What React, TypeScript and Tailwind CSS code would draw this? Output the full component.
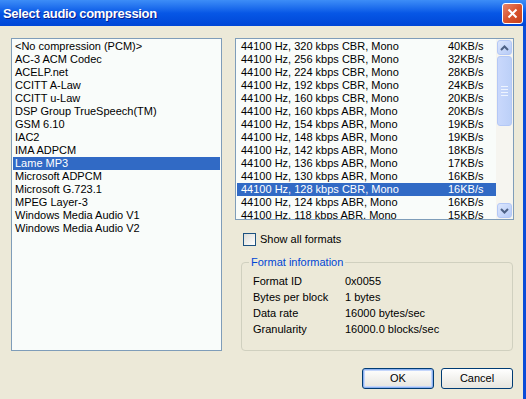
import React from "react";

const codecs = [
  "<No compression (PCM)>",
  "AC-3 ACM Codec",
  "ACELP.net",
  "CCITT A-Law",
  "CCITT u-Law",
  "DSP Group TrueSpeech(TM)",
  "GSM 6.10",
  "IAC2",
  "IMA ADPCM",
  "Lame MP3",
  "Microsoft ADPCM",
  "Microsoft G.723.1",
  "MPEG Layer-3",
  "Windows Media Audio V1",
  "Windows Media Audio V2",
];

const formats: [string, string][] = [
  ["44100 Hz, 320 kbps CBR, Mono", "40KB/s"],
  ["44100 Hz, 256 kbps CBR, Mono", "32KB/s"],
  ["44100 Hz, 224 kbps CBR, Mono", "28KB/s"],
  ["44100 Hz, 192 kbps CBR, Mono", "24KB/s"],
  ["44100 Hz, 160 kbps CBR, Mono", "20KB/s"],
  ["44100 Hz, 160 kbps ABR, Mono", "20KB/s"],
  ["44100 Hz, 154 kbps ABR, Mono", "19KB/s"],
  ["44100 Hz, 148 kbps ABR, Mono", "19KB/s"],
  ["44100 Hz, 142 kbps ABR, Mono", "18KB/s"],
  ["44100 Hz, 136 kbps ABR, Mono", "17KB/s"],
  ["44100 Hz, 130 kbps ABR, Mono", "16KB/s"],
  ["44100 Hz, 128 kbps CBR, Mono", "16KB/s"],
  ["44100 Hz, 124 kbps ABR, Mono", "16KB/s"],
  ["44100 Hz, 118 kbps ABR, Mono", "15KB/s"],
];

const info: [string, string][] = [
  ["Format ID", "0x0055"],
  ["Bytes per block", "1 bytes"],
  ["Data rate", "16000 bytes/sec"],
  ["Granularity", "16000.0 blocks/sec"],
];

function Arrow({ up }: { up: boolean }) {
  return (
    <svg width="9" height="6" viewBox="0 0 9 6">
      <path
        d={up ? "M1 5 L4.5 1.5 L8 5" : "M1 1 L4.5 4.5 L8 1"}
        fill="none"
        stroke="#4D6185"
        strokeWidth="2"
      />
    </svg>
  );
}

function ScrollBtn({ up }: { up: boolean }) {
  return (
    <div className="h-[17px] w-[17px] p-[1px]">
      <div className="flex h-full w-full items-center justify-center rounded-[3px] border border-[#B4C8F6] bg-gradient-to-br from-[#DCE6FD] to-[#B6CBF7]">
        <Arrow up={up} />
      </div>
    </div>
  );
}

export default function App() {
  return (
    <div
      className="flex h-[399px] w-[526px] flex-col overflow-hidden bg-[#ECE9D8] text-[11px] leading-[13px] text-black"
      style={{ fontFamily: '"Liberation Sans", Arial, sans-serif' }}
    >
      {/* Title bar */}
      <div className="flex h-[26px] shrink-0 items-center justify-between bg-gradient-to-b from-[#3D8DF7] via-[#0757E6] to-[#0046D6] pl-[3px] pr-[3px]">
        <span
          className="text-[13px] font-bold tracking-[-0.3px] text-white"
          style={{ textShadow: "1px 1px 0 #0A1E8C" }}
        >
          Select audio compression
        </span>
        <div className="flex h-[21px] w-[21px] items-center justify-center rounded-[3px] border border-white bg-gradient-to-br from-[#E8846A] via-[#D9542E] to-[#C6411B]">
          <svg width="11" height="11" viewBox="0 0 11 11">
            <path d="M1.5 1.5 L9.5 9.5 M9.5 1.5 L1.5 9.5" stroke="white" strokeWidth="2" />
          </svg>
        </div>
      </div>

      {/* Body */}
      <div className="flex flex-1 border-r-[3px] border-r-[#0A4CD8]">
        <div className="flex pl-[11px] pt-[12px]">
          {/* Codec list */}
          <div className="h-[313px] w-[211px] border border-[#7F9DB9] bg-[#F9FCFA] p-[1px]">
            {codecs.map((c) => {
              const sel = c === "Lame MP3";
              return (
                <div
                  key={c}
                  className={
                    "h-[13px] whitespace-nowrap pl-[2px] " +
                    (sel ? "bg-[#316AC5] text-white" : "")
                  }
                >
                  {c}
                </div>
              );
            })}
          </div>

          {/* Right column */}
          <div className="ml-[13px] flex w-[279px] flex-col">
            <div className="flex h-[182px] border border-[#7F9DB9] bg-[#F9FCFA]">
              <div className="flex-1 overflow-hidden pl-[1px] pt-[1px]">
                {formats.map(([f, r], i) => {
                  const sel = i === 11;
                  return (
                    <div
                      key={i}
                      className={
                        "flex h-[13px] whitespace-nowrap pl-[4px] " +
                        (sel ? "bg-[#316AC5] text-white" : "")
                      }
                    >
                      <span className="w-[207px]">{f}</span>
                      <span>{r}</span>
                    </div>
                  );
                })}
              </div>
              {/* Scrollbar */}
              <div className="flex w-[17px] flex-col bg-[#F6F5F0]">
                <ScrollBtn up />
                <div className="h-[71px] w-[17px] p-[1px] pt-0">
                  <div className="flex h-full w-full flex-col items-center justify-center gap-[2px] rounded-[3px] border border-[#B4C8F6] bg-gradient-to-r from-[#C9D8FC] to-[#BCD0F8]">
                    <div className="h-[1px] w-[7px] bg-[#EEF4FE]" />
                    <div className="h-[1px] w-[7px] bg-[#EEF4FE]" />
                    <div className="h-[1px] w-[7px] bg-[#EEF4FE]" />
                    <div className="h-[1px] w-[7px] bg-[#EEF4FE]" />
                  </div>
                </div>
                <div className="flex-1" />
                <ScrollBtn up={false} />
              </div>
            </div>

            {/* Checkbox */}
            <div className="mt-[12px] flex items-center pl-[8px]">
              <div className="h-[13px] w-[13px] border border-[#1C5180] bg-gradient-to-br from-[#DCDCD7] to-[#FFFFFF]" />
              <span className="ml-[4px] pt-[1px]">Show all formats</span>
            </div>

            {/* Group box */}
            <fieldset className="ml-[6px] mt-[10px] h-[95px] w-[272px] rounded-[4px] border border-[#D0D0BF] pl-[11px] pt-[6px]">
              <legend className="-ml-[4px] px-[2px] text-[#0046D5]">Format information</legend>
              <div className="flex flex-col gap-[3px]">
                {info.map(([k, v]) => (
                  <div key={k} className="flex h-[13px]">
                    <span className="w-[92px]">{k}</span>
                    <span>{v}</span>
                  </div>
                ))}
              </div>
            </fieldset>

            {/* Buttons */}
            <div className="mt-[17px] flex justify-end gap-[7px] pr-[1px]">
              <button className="flex h-[21px] w-[72px] items-center justify-center rounded-[3px] border border-[#003C74] bg-gradient-to-b from-[#FFFFFF] to-[#E6E5DE] shadow-[inset_0_0_0_1px_#8DB2F0,inset_0_0_0_2px_#C4D6FB]">
                OK
              </button>
              <button className="flex h-[21px] w-[72px] items-center justify-center rounded-[3px] border border-[#003C74] bg-gradient-to-b from-[#FFFFFF] to-[#E6E5DE]">
                Cancel
              </button>
            </div>
          </div>
        </div>
      </div>
    </div>
  );
}
